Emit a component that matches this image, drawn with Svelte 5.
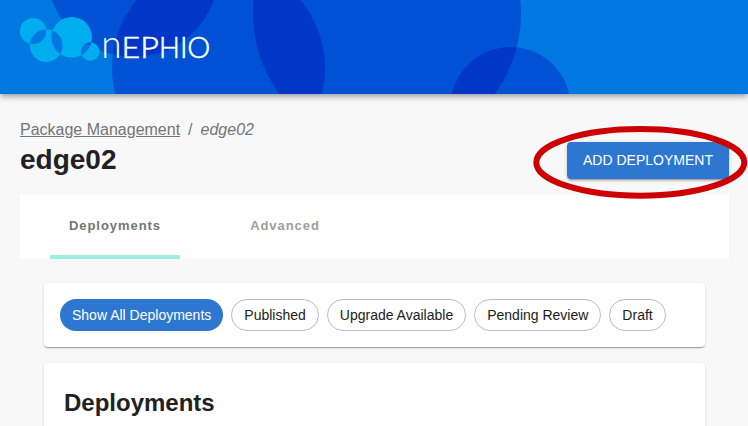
<script>
  const tabs = ['Deployments', 'Advanced'];
  const filters = ['Show All Deployments', 'Published', 'Upgrade Available', 'Pending Review', 'Draft'];
  let tab = $state('Deployments');
  let filter = $state('Show All Deployments');
</script>

<div class="page">
  <header>
    <svg width="748" height="94" viewBox="0 0 748 94" role="img" aria-label="Nephio">
      <g class="bubbles">
        <circle cx="133" cy="-29" r="86" />
        <circle cx="218.5" cy="68" r="106.5" />
        <circle cx="387" cy="14" r="134" />
        <circle cx="510.5" cy="107" r="60" />
      </g>
      <path
        class="cloud"
        d="M19.9 31a13.1 13.1 0 1 0 26.2 0a13.1 13.1 0 1 0 -26.2 0z
           M29.9 45.6a16.3 16.3 0 1 0 32.6 0a16.3 16.3 0 1 0 -32.6 0z
           M51.4 37.3a20.3 20.3 0 1 0 40.6 0a20.3 20.3 0 1 0 -40.6 0z
           M81 51.5a9.2 9.2 0 1 0 18.4 0a9.2 9.2 0 1 0 -18.4 0z"
      />
      <g class="wordmark">
        <text class="small" x="101.2" y="58" textLength="20.3" lengthAdjust="spacingAndGlyphs">n</text>
        <text x="121.6" y="58" textLength="18.6" lengthAdjust="spacingAndGlyphs">E</text>
        <text x="140.3" y="58" textLength="18.6" lengthAdjust="spacingAndGlyphs">P</text>
        <text x="159" y="58" textLength="20.8" lengthAdjust="spacingAndGlyphs">H</text>
        <text x="179.9" y="58">I</text>
        <text x="187.2" y="58">O</text>
      </g>
    </svg>
  </header>

  <section class="heading">
    <div>
      <nav class="crumbs"><a href="#packages">Package Management</a><span class="sep">/</span><em>edge02</em></nav>
      <h1>edge02</h1>
    </div>
    <div class="action">
      <button class="add">ADD DEPLOYMENT</button>
      <svg class="ring" width="216" height="76" viewBox="0 0 216 76" aria-hidden="true">
        <ellipse cx="108.3" cy="38.4" rx="104" ry="33.3" />
      </svg>
    </div>
  </section>

  <div class="tabs">
    {#each tabs as name}
      <button class:active={tab === name} onclick={() => (tab = name)}>{name}</button>
    {/each}
  </div>

  <main>
    <div class="card filters">
      {#each filters as name}
        <button class="chip" class:active={filter === name} onclick={() => (filter = name)}>{name}</button>
      {/each}
    </div>
    <div class="card list"><h2>Deployments</h2></div>
  </main>
</div>

<style>
  :global(body) {
    margin: 0;
    overflow: hidden;
  }
  .page {
    width: 748px;
    height: 426px;
    overflow: hidden;
    background: #f8f8f8;
    color: #212121;
    font-family: 'Liberation Sans', Arial, sans-serif;
  }
  button {
    font-family: inherit;
    border: 0;
    margin: 0;
    cursor: pointer;
    white-space: nowrap;
  }
  header {
    height: 94px;
    background: #0078e2;
    box-shadow: 0 2px 4px -1px rgba(0, 0, 0, 0.2), 0 4px 5px rgba(0, 0, 0, 0.14), 0 1px 10px rgba(0, 0, 0, 0.12);
  }
  header svg {
    display: block;
  }
  .bubbles {
    fill: rgb(0, 0, 180);
    fill-opacity: 0.32;
  }
  .cloud {
    fill: #00adef;
    fill-rule: evenodd;
  }
  .wordmark {
    fill: #fff;
    stroke: #fff;
    stroke-width: 0.6px;
    font-family: Lato, sans-serif;
    font-weight: 300;
    font-size: 29px;
  }
  .small {
    font-size: 40px;
    stroke-width: 0.1px;
  }
  .heading {
    display: flex;
    justify-content: space-between;
    padding: 26px 19px 0 20px;
    height: 75px;
  }
  .crumbs {
    display: flex;
    font-size: 16px;
    line-height: 20px;
    color: #757575;
  }
  .crumbs a {
    color: inherit;
  }
  .sep {
    margin: 0 8px;
  }
  h1 {
    margin: 3px 0 0;
    font-size: 28px;
    line-height: 34px;
  }
  .action {
    position: relative;
    margin-top: 22px;
    height: 37px;
  }
  .add {
    width: 162px;
    height: 37px;
    padding: 0 0 2px;
    border-radius: 4px;
    background: #2e77d0;
    color: #fff;
    font-size: 14px;
    box-shadow: 0 3px 1px -2px rgba(0, 0, 0, 0.2), 0 2px 2px rgba(0, 0, 0, 0.14), 0 1px 5px rgba(0, 0, 0, 0.12);
  }
  .ring {
    position: absolute;
    left: -35px;
    top: -18px;
    fill: none;
    stroke: #cc0000;
    stroke-width: 6px;
    pointer-events: none;
    z-index: 1;
  }
  .tabs {
    display: flex;
    gap: 40px;
    margin: 0 19px 0 20px;
    padding-left: 30px;
    height: 64px;
    background: #fff;
  }
  .tabs button {
    width: 130px;
    padding: 0;
    border-bottom: 4px solid transparent;
    background: none;
    font-size: 13px;
    font-weight: 700;
    letter-spacing: 0.95px;
    color: #9e9e9e;
  }
  .tabs button.active {
    color: #757575;
    border-color: #9bf0e1;
  }
  main {
    display: flex;
    flex-direction: column;
    gap: 16px;
    padding: 24px 43px 0 44px;
  }
  .card {
    background: #fff;
    border-radius: 4px;
    box-shadow: 0 2px 1px -1px rgba(0, 0, 0, 0.2), 0 1px 1px rgba(0, 0, 0, 0.14), 0 1px 3px rgba(0, 0, 0, 0.12);
  }
  .filters {
    display: flex;
    gap: 8px;
    padding: 16px;
  }
  .chip {
    height: 32px;
    padding: 0 12px;
    border: 1px solid #bdbdbd;
    border-radius: 16px;
    background: #fff;
    color: #212121;
    font-size: 14px;
  }
  .chip.active {
    border: 0;
    background: #2e77d0;
    color: #fff;
  }
  .list {
    height: 120px;
    padding: 24px 20px;
    box-sizing: border-box;
  }
  h2 {
    margin: 0;
    font-size: 24px;
    line-height: 32px;
  }
</style>
